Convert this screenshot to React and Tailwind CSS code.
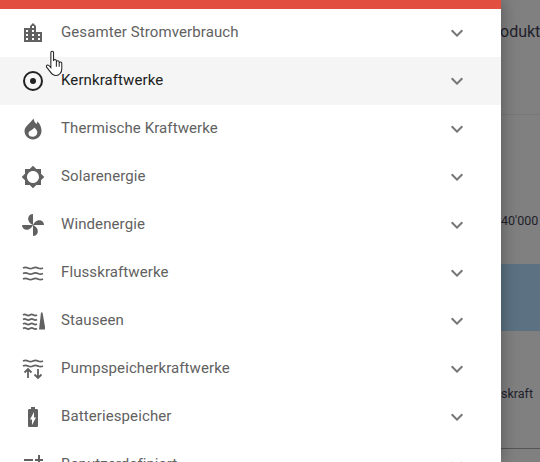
import React from 'react';

const ICON_PATHS = {
    city: 'M15 11V5l-3-3-3 3v2H3v14h18V11h-6zm-8 8H5v-2h2v2zm0-4H5v-2h2v2zm0-4H5V9h2v2zm6 8h-2v-2h2v2zm0-4h-2v-2h2v2zm0-4h-2V9h2v2zm0-4h-2V5h2v2zm6 12h-2v-2h2v2zm0-4h-2v-2h2v2z',
    flame: 'M12.5 1.500C13 4.500 14.500 6.500 15.500 7L16.500 4.500C19.500 7.500 20.500 11 20.500 14C20.500 18.500 16.500 22.500 12 22.500C7.500 22.500 3.500 18.500 3.500 14C3.500 9.500 9 6.500 12.500 1.500zM13 10.500c.2 2-5.500 3-5.500 6 0 2 1.800 3.300 4 3.300 2.800 0 4.800-2 4.800-4.300 0-2.200-1.500-3.700-3.300-5z',
    sun: 'M20 15.31L23.31 12 20 8.69V4h-4.69L12 .69 8.69 4H4v4.69L.69 12 4 15.31V20h4.69L12 23.31 15.31 20H20v-4.69zM12 18c-3.31 0-6-2.69-6-6s2.69-6 6-6 6 2.69 6 6-2.69 6-6 6z',
    battery: 'M15.67 4H14V2h-4v2H8.33C7.6 4 7 4.6 7 5.33v15.33C7 21.4 7.6 22 8.33 22h7.33c.74 0 1.34-.6 1.34-1.33V5.33C17 4.6 16.4 4 15.67 4zM11 20v-5.5H9L13 7v5.500h2L11 20z',
};

const BLADE = 'M12 12L12 1C8 1 6.5 4.500 7.500 7.500C8 9.500 10 11 12 12z';

const wave = (y, w = 20) => {
    const q = w / 4;
    return `M2 ${y}q${q / 2} -1.2 ${q} 0t${q} 0t${q} 0t${q} 0`;
};

const Icon = ({ name }) => {
    if (name === 'target') {
        return (
            <svg viewBox="0 0 24 24" className="h-6 w-6 text-[#212121]" fill="none">
                <circle cx="12" cy="12" r="9" stroke="currentColor" strokeWidth="2" />
                <circle cx="12" cy="12" r="3" fill="currentColor" />
            </svg>
        );
    }
    if (name === 'fan') {
        return (
            <svg viewBox="0 0 24 24" className="h-6 w-6 text-[#616161]" fill="currentColor">
                <path d={BLADE} />
                <path d={BLADE} transform="rotate(90 12 12)" />
                <path d={BLADE} transform="rotate(180 12 12)" />
                <path d={BLADE} transform="rotate(270 12 12)" />
            </svg>
        );
    }
    if (name === 'river') {
        return (
            <svg viewBox="0 0 24 24" className="h-6 w-6 text-[#616161]" fill="none" stroke="currentColor" strokeWidth="1.8">
                <path d={wave(7)} />
                <path d={wave(12.5)} />
                <path d={wave(18)} />
            </svg>
        );
    }
    if (name === 'dam') {
        return (
            <svg viewBox="0 0 24 24" className="h-6 w-6 text-[#616161]" fill="none" stroke="currentColor" strokeWidth="1.7">
                <path d={wave(6, 14)} />
                <path d={wave(10.5, 14)} />
                <path d={wave(15, 14)} />
                <path d={wave(19.5, 14)} />
                <path d="M20 3.500h1.500L24.500 20.500h-6.500z" fill="currentColor" stroke="none" />
            </svg>
        );
    }
    if (name === 'pump') {
        return (
            <svg viewBox="0 0 24 24" className="h-6 w-6 text-[#616161]" fill="none" stroke="currentColor" strokeWidth="1.8">
                <path d={wave(4)} />
                <path d={wave(9)} />
                <path d="M7 21v-9M3.500 15.500L7 12l3.500 3.500M17 12v9M13.500 17.500L17 21l3.500-3.500" />
            </svg>
        );
    }
    if (name === 'custom') {
        return (
            <svg viewBox="0 0 24 24" className="h-6 w-6 text-[#616161]" fill="currentColor">
                <path d="M3 6h9v2H3zM17 2h2v4h3v2h-3v4h-2V8h-3V6h3zM3 12h7v2H3z" />
            </svg>
        );
    }
    return (
        <svg viewBox="0 0 24 24" className="h-6 w-6 text-[#616161]" fill="currentColor" fillRule="evenodd">
            <path d={ICON_PATHS[name]} />
        </svg>
    );
};

const rows = [
    { label: 'Gesamter Stromverbrauch', icon: 'city' },
    { label: 'Kernkraftwerke', icon: 'target', active: true },
    { label: 'Thermische Kraftwerke', icon: 'flame' },
    { label: 'Solarenergie', icon: 'sun' },
    { label: 'Windenergie', icon: 'fan' },
    { label: 'Flusskraftwerke', icon: 'river' },
    { label: 'Stauseen', icon: 'dam' },
    { label: 'Pumpspeicherkraftwerke', icon: 'pump' },
    { label: 'Batteriespeicher', icon: 'battery' },
    { label: 'Benutzerdefiniert', icon: 'custom' },
];

const HandCursor = () => (
    <svg viewBox="0 0 17 25" className="absolute left-[45px] top-[50px] z-20 h-[26px] w-[19px]">
        <path
            d="M5 2.500c0-1.800 2.600-1.800 2.600 0v8c.2-1.700 2.500-1.700 2.700 0v1c.2-1.600 2.500-1.600 2.700 0v1c.2-1.400 2.500-1.400 2.500.3v5.200c0 3.500-2.300 6.500-5.500 6.500-3 0-4.300-1.500-5.700-3.700L.9 16.500c-.9-1.500 1-2.800 2.200-1.600L5 17z"
            fill="#fff"
            stroke="#222"
            strokeWidth="1"
        />
        <path d="M10.300 11.500v4.500M13 12.500v3.500" stroke="#222" strokeWidth="1" fill="none" />
    </svg>
);

const App = () => (
    <div className="relative flex h-[462px] w-[540px] overflow-hidden font-['Roboto',sans-serif]">
        <aside className="z-10 w-[501px] shrink-0 overflow-hidden bg-white shadow-[0_0_16px_rgba(0,0,0,0.35)]">
            <div className="h-[9px] bg-[#e24e40]" />
            {rows.map((row) => (
                <div key={row.label} className={`flex h-12 items-center pl-[21px] pr-8 ${row.active ? 'bg-[#f5f5f5]' : ''}`}>
                    <Icon name={row.icon} />
                    <span className={`ml-4 flex-1 pb-0.5 text-[15px] tracking-[0.1px] ${row.active ? 'text-[#212121]' : 'text-[#616161]'}`}>{row.label}</span>
                    <svg viewBox="0 0 24 24" className="h-6 w-6 text-[#757575]" fill="currentColor">
                        <path d="M16.59 8.59L12 13.17 7.41 8.59 6 10l6 6 6-6z" />
                    </svg>
                </div>
            ))}
        </aside>

        {/* dimmed page behind the drawer */}
        <main className="flex w-[39px] flex-col overflow-hidden whitespace-nowrap bg-[#808080] text-[#1f1f2b]">
            <div className="h-[115px] border-b border-[#787878] pt-[20px] text-base -indent-[1px]">odukt</div>
            <div className="h-[149px] pt-[97px] text-[12.5px]">40'000</div>
            <div className="h-[67px] bg-[#5c7282]" />
            <div className="h-[118px] border-b border-[#555] pt-[54px] text-[12.5px]">skraft</div>
        </main>

        <HandCursor />
    </div>
);

export default App;
